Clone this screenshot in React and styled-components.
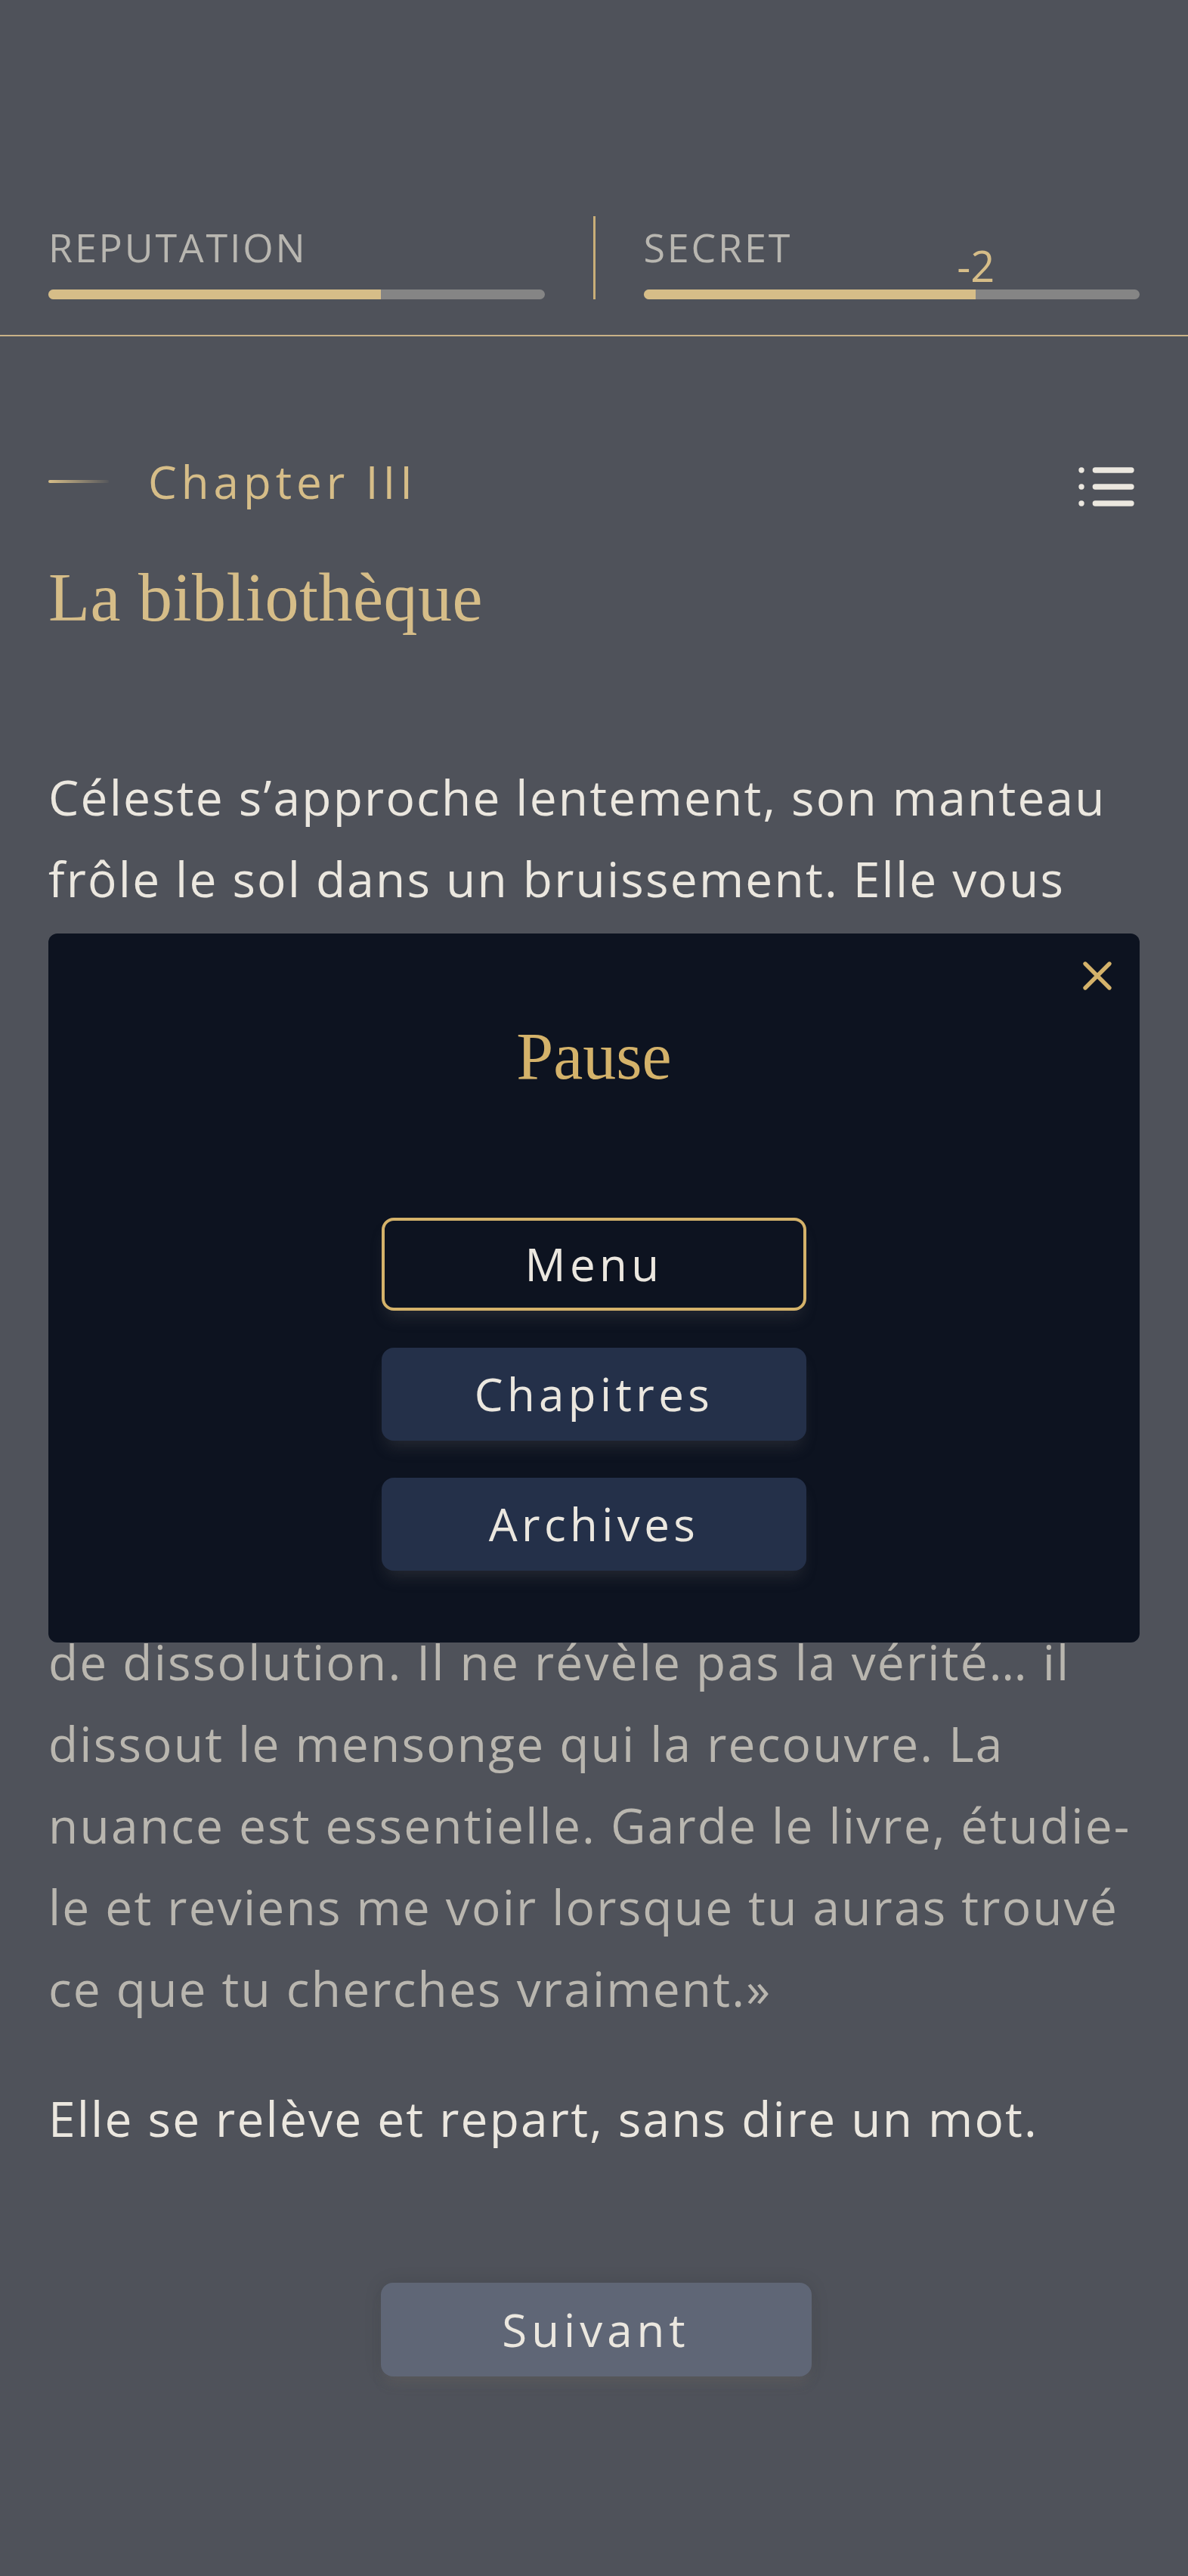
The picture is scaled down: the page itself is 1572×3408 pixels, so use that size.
import React from "react";
import styled, { createGlobalStyle } from "styled-components";

// Base
const GlobalStyle = createGlobalStyle`
  body {
    margin: 0;
    background: #4f525a;
    font-family: "Open Sans", "Noto Sans", sans-serif;
  }
`;

const Page = styled.div`
  min-height: 3408px;
  box-sizing: border-box;
  padding-top: 286px;
`;

// Stats header
const Stats = styled.div`
  display: grid;
  grid-template-columns: 1fr 3px 1fr;
  column-gap: 64px;
  padding: 0 64px;
`;

const Stat = styled.div`
  display: flex;
  flex-direction: column;
  padding-top: 15px;
`;

const StatLabel = styled.span`
  font-size: 52px;
  line-height: 52px;
  letter-spacing: 2.8px;
  text-transform: uppercase;
  color: #b8b6b0;
`;

const Track = styled.div`
  position: relative;
  margin-top: 30px;
  height: 13px;
  border-radius: 7px;
  background: #858585;
`;

const Fill = styled.div`
  height: 100%;
  width: ${(p) => p.$value}%;
  border-radius: 7px 0 0 7px;
  background: #d6bd88;
`;

const Delta = styled.span`
  position: absolute;
  bottom: calc(100% + 4px);
  transform: translateX(-50%);
  font-size: 56px;
  line-height: 1;
  color: #d6bd88;
`;

const Divider = styled.div`
  background: #c9ae78;
`;

const Rule = styled.div`
  margin-top: 47px;
  height: 2px;
  background: #c9b288;
`;

// Chapter heading
const ChapterHeader = styled.div`
  display: flex;
  align-items: center;
  justify-content: space-between;
  margin-top: 155px;
  padding: 0 64px;
`;

const ChapterTag = styled.div`
  display: flex;
  align-items: center;
  gap: 52px;
  padding-bottom: 14px;
`;

const Flourish = styled.span`
  width: 80px;
  height: 4px;
  border-radius: 2px;
  background: linear-gradient(90deg, #d6bd88, rgba(214, 189, 136, 0.05));
`;

const ChapterLabel = styled.span`
  font-size: 60px;
  line-height: 1;
  letter-spacing: 0.1em;
  color: #d6bd88;
`;

const IconButton = styled.button`
  display: flex;
  padding: 0;
  border: none;
  background: none;
  cursor: pointer;
`;

const Title = styled.h1`
  margin: 49px 64px 0;
  font-family: "Liberation Serif", serif;
  font-size: 90px;
  line-height: 1.2;
  font-weight: normal;
  letter-spacing: 0.5px;
  color: #d6bd88;
`;

// Story text
const Story = styled.div`
  display: flex;
  flex-direction: column;
  gap: 64px;
  margin-top: 156px;
  padding: 0 64px;
`;

const Paragraph = styled.p`
  margin: 0;
  font-size: 64px;
  line-height: 108px;
  letter-spacing: 2.2px;
  color: ${(p) => (p.$muted ? "#b9b6af" : "#ebe7df")};
`;

const Line = styled.span`
  display: block;
  white-space: nowrap;
`;

const NextRow = styled.div`
  display: flex;
  justify-content: center;
  margin-top: 163px;
  padding-left: 5px;
`;

const NextButton = styled.button`
  width: 570px;
  height: 124px;
  border: none;
  border-radius: 16px;
  background: #5f6676;
  color: #ebe7df;
  font-family: inherit;
  font-size: 60px;
  letter-spacing: 0.1em;
  box-shadow: 0 0 24px rgba(0, 0, 0, 0.1), 0 14px 16px -6px rgba(120, 115, 110, 0.35);
  cursor: pointer;
`;

// Pause modal
const Overlay = styled.div`
  position: fixed;
  inset: 0;
  display: flex;
  align-items: center;
  padding: 0 64px;
`;

const Modal = styled.div`
  position: relative;
  width: 100%;
  box-sizing: border-box;
  display: flex;
  flex-direction: column;
  align-items: center;
  padding: 110px 0 95px;
  border-radius: 12px;
  background: #0d1320;
`;

const CloseButton = styled(IconButton)`
  position: absolute;
  top: 24px;
  right: 24px;
`;

const ModalTitle = styled.h2`
  margin: 0 0 160px;
  font-family: "Liberation Serif", serif;
  font-size: 88px;
  line-height: 1.2;
  font-weight: normal;
  color: #d4b26a;
`;

const MenuList = styled.div`
  display: flex;
  flex-direction: column;
  gap: 49px;
`;

const MenuButton = styled.button`
  width: 562px;
  height: 123px;
  box-sizing: border-box;
  border: 4px solid ${(p) => (p.$active ? "#d4b26a" : "transparent")};
  border-radius: 16px;
  background: ${(p) => (p.$active ? "transparent" : "#243049")};
  color: #ebe7df;
  font-family: inherit;
  font-size: 60px;
  letter-spacing: 0.09em;
  box-shadow: 0 14px 20px -6px rgba(90, 90, 90, 0.3);
  cursor: pointer;
`;

const ListIcon = () => (
  <svg width="88" height="88" viewBox="0 0 24 24" fill="none" stroke="#ebe7df" strokeWidth="2" strokeLinecap="round">
    <path d="M3 6h.01M3 12h.01M3 18h.01M8 6h13M8 12h13M8 18h13" />
  </svg>
);

const CloseIcon = () => (
  <svg width="64" height="64" viewBox="0 0 24 24" fill="none" stroke="#d4b26a" strokeWidth="2" strokeLinecap="round">
    <path d="M18 6 6 18M6 6l12 12" />
  </svg>
);

const stats = [
  { label: "Reputation", value: 67 },
  { label: "Secret", value: 67, delta: "-2" },
];

const story = [
  {
    lines: [
      "Céleste s’approche lentement, son manteau",
      "frôle le sol dans un bruissement. Elle vous",
      "tend un vieux livre relié de cuir sombre et",
      "s’agenouille près de vous.",
    ],
  },
  {
    muted: true,
    lines: [
      "«Ce livre ne contient pas de réponses, dit-",
      "elle doucement. Il contient des questions.",
      "Chaque page que tu tourneras t’éloignera",
      "un peu plus de ce que tu crois savoir. Ce",
      "n’est pas un ouvrage de révélation, c’est",
      "un ouvrage d’effacement, un instrument",
      "de dissolution. Il ne révèle pas la vérité… il",
      "dissout le mensonge qui la recouvre. La",
      "nuance est essentielle. Garde le livre, étudie-",
      "le et reviens me voir lorsque tu auras trouvé",
      "ce que tu cherches vraiment.»",
    ],
  },
  { lines: ["Elle se relève et repart, sans dire un mot."] },
];

const StatBlock = ({ label, value, delta }) => (
  <Stat>
    <StatLabel>{label}</StatLabel>
    <Track>
      <Fill $value={value} />
      {delta && <Delta style={{ left: `${value}%` }}>{delta}</Delta>}
    </Track>
  </Stat>
);

const App = () => {
  return (
    <Page>
      <GlobalStyle />
      <Stats>
        <StatBlock {...stats[0]} />
        <Divider />
        <StatBlock {...stats[1]} />
      </Stats>
      <Rule />

      <ChapterHeader>
        <ChapterTag>
          <Flourish />
          <ChapterLabel>Chapter III</ChapterLabel>
        </ChapterTag>
        <IconButton aria-label="Chapitres">
          <ListIcon />
        </IconButton>
      </ChapterHeader>
      <Title>La bibliothèque</Title>

      <Story>
        {story.map((p, i) => (
          <Paragraph key={i} $muted={p.muted}>
            {p.lines.map((l, j) => (
              <Line key={j}>{l}</Line>
            ))}
          </Paragraph>
        ))}
      </Story>

      <NextRow>
        <NextButton>Suivant</NextButton>
      </NextRow>

      <Overlay>
        <Modal>
          <CloseButton aria-label="Fermer">
            <CloseIcon />
          </CloseButton>
          <ModalTitle>Pause</ModalTitle>
          <MenuList>
            <MenuButton $active>Menu</MenuButton>
            <MenuButton>Chapitres</MenuButton>
            <MenuButton>Archives</MenuButton>
          </MenuList>
        </Modal>
      </Overlay>
    </Page>
  );
};

export default App;
